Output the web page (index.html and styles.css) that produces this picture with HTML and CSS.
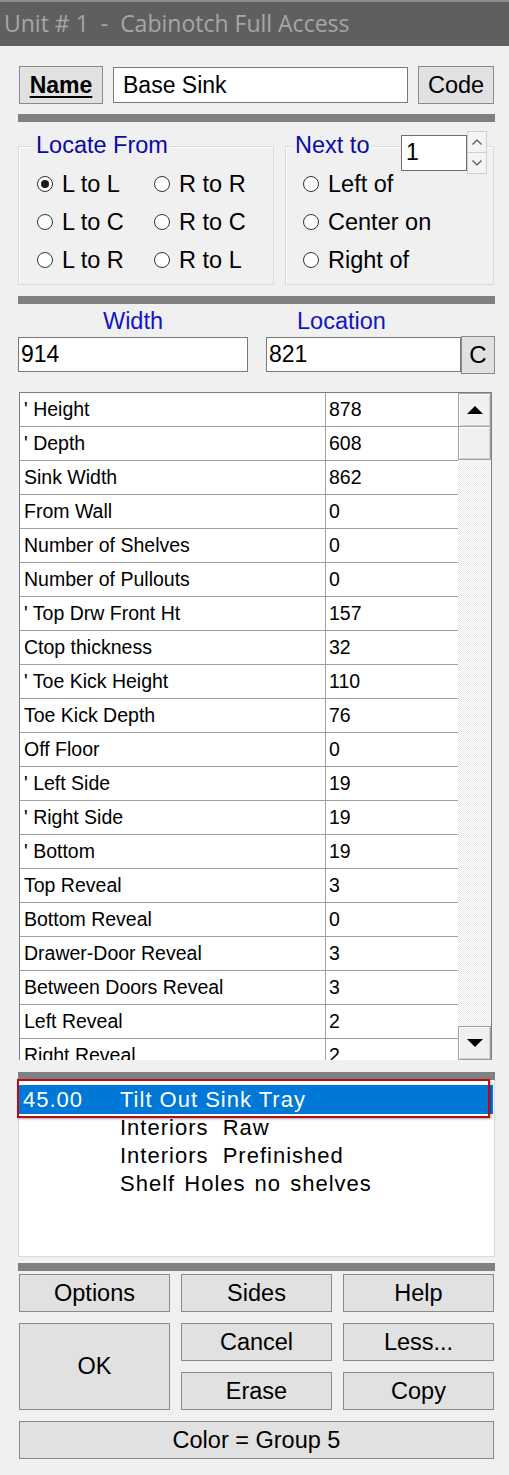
FILE: index.html
```html
<!DOCTYPE html>
<html>
<head>
<meta charset="utf-8">
<link rel="stylesheet" href="styles.css">
</head>
<body>
<div class="titlebar">Unit # 1  -  Cabinotch Full Access</div>
<div class="main">
  <div class="name-row">
    <div class="btn name-btn"><span class="u">Name</span></div>
    <div class="field name-field">Base Sink</div>
    <div class="btn code-btn">Code</div>
  </div>
  <div class="bar bar1"></div>
  <div class="groups">
    <div class="group locate">
      <span class="legend">Locate From</span>
      <div class="radios two">
        <div class="radio"><span class="dot on"></span>L to L</div>
        <div class="radio"><span class="dot"></span>R to R</div>
        <div class="radio"><span class="dot"></span>L to C</div>
        <div class="radio"><span class="dot"></span>R to C</div>
        <div class="radio"><span class="dot"></span>L to R</div>
        <div class="radio"><span class="dot"></span>R to L</div>
      </div>
    </div>
    <div class="group nextto">
      <span class="legend">Next to</span>
      <div class="spinner">
        <div class="spin-field">1</div>
        <div class="spin-btns">
          <div class="spin-btn"><svg width="12" height="8" viewBox="0 0 12 8"><polyline points="1.5,6.5 6,2 10.5,6.5" fill="none" stroke="#555" stroke-width="1.2"/></svg></div>
          <div class="spin-btn"><svg width="12" height="8" viewBox="0 0 12 8"><polyline points="1.5,1.5 6,6 10.5,1.5" fill="none" stroke="#555" stroke-width="1.2"/></svg></div>
        </div>
      </div>
      <div class="radios one">
        <div class="radio"><span class="dot"></span>Left of</div>
        <div class="radio"><span class="dot"></span>Center on</div>
        <div class="radio"><span class="dot"></span>Right of</div>
      </div>
    </div>
  </div>
  <div class="bar bar2"></div>
  <div class="dims">
    <div class="dim-col w-col">
      <div class="dim-label center">Width</div>
      <div class="field w-field">914</div>
    </div>
    <div class="dim-col l-col">
      <div class="dim-label loc">Location</div>
      <div class="loc-row">
        <div class="field l-field">821</div>
        <div class="btn c-btn">C</div>
      </div>
    </div>
  </div>
  <div class="grid-wrap">
    <div class="rows">
      <div class="row"><div class="k">' Height</div><div class="v">878</div></div>
      <div class="row"><div class="k">' Depth</div><div class="v">608</div></div>
      <div class="row"><div class="k">Sink Width</div><div class="v">862</div></div>
      <div class="row"><div class="k">From Wall</div><div class="v">0</div></div>
      <div class="row"><div class="k">Number of Shelves</div><div class="v">0</div></div>
      <div class="row"><div class="k">Number of Pullouts</div><div class="v">0</div></div>
      <div class="row"><div class="k">' Top Drw Front Ht</div><div class="v">157</div></div>
      <div class="row"><div class="k">Ctop thickness</div><div class="v">32</div></div>
      <div class="row"><div class="k">' Toe Kick Height</div><div class="v">110</div></div>
      <div class="row"><div class="k">Toe Kick Depth</div><div class="v">76</div></div>
      <div class="row"><div class="k">Off Floor</div><div class="v">0</div></div>
      <div class="row"><div class="k">' Left Side</div><div class="v">19</div></div>
      <div class="row"><div class="k">' Right Side</div><div class="v">19</div></div>
      <div class="row"><div class="k">' Bottom</div><div class="v">19</div></div>
      <div class="row"><div class="k">Top Reveal</div><div class="v">3</div></div>
      <div class="row"><div class="k">Bottom Reveal</div><div class="v">0</div></div>
      <div class="row"><div class="k">Drawer-Door Reveal</div><div class="v">3</div></div>
      <div class="row"><div class="k">Between Doors Reveal</div><div class="v">3</div></div>
      <div class="row"><div class="k">Left Reveal</div><div class="v">2</div></div>
      <div class="row"><div class="k">Right Reveal</div><div class="v">2</div></div>
    </div>
    <div class="scrollbar">
      <div class="sb-btn"><svg width="18" height="10" viewBox="0 0 18 10"><polygon points="1,9 9,1 17,9" fill="#000"/></svg></div>
      <div class="sb-thumb"></div>
      <div class="sb-track"></div>
      <div class="sb-btn"><svg width="18" height="10" viewBox="0 0 18 10"><polygon points="1,1 9,9 17,1" fill="#000"/></svg></div>
    </div>
  </div>
  <div class="bar bar3"></div>
  <div class="listbox">
    <div class="line sel"><span class="num">45.00</span><span class="desc">Tilt Out Sink Tray</span></div>
    <div class="line"><span class="num"></span><span class="desc">Interiors  Raw</span></div>
    <div class="line"><span class="num"></span><span class="desc">Interiors  Prefinished</span></div>
    <div class="line"><span class="num"></span><span class="desc wide">Shelf Holes no shelves</span></div>
    <div class="redframe"></div>
  </div>
  <div class="bar bar4"></div>
  <div class="buttons">
    <div class="btn">Options</div>
    <div class="btn">Sides</div>
    <div class="btn">Help</div>
    <div class="btn ok">OK</div>
    <div class="btn">Cancel</div>
    <div class="btn">Less...</div>
    <div class="btn">Erase</div>
    <div class="btn">Copy</div>
    <div class="btn color">Color = Group 5</div>
  </div>
</div>
</body>
</html>
```

FILE: styles.css
```css
* { box-sizing: border-box; }
html, body { margin: 0; padding: 0; }
body {
  background: #f0f0f0;
  width: 509px;
  height: 1475px;
  overflow: hidden;
  font-family: "Liberation Sans", Arial, sans-serif;
  font-size: 23.5px;
  color: #000;
}
.titlebar {
  height: 46px;
  border-top: 2px solid #8e8e8e;
  background: #5f5f5f;
  color: #a6a6a6;
  font-family: "Open Sans", "Noto Sans", sans-serif;
  font-size: 23px;
  line-height: 43px;
  padding-left: 4px;
  white-space: pre;
}
.main { padding-left: 18px; width: 495px; }

.btn {
  background: #e1e1e1;
  border: 1px solid #8a8a8a;
  display: flex;
  align-items: center;
  justify-content: center;
  font-size: 23.5px;
}
.field {
  background: #fff;
  border: 1px solid #7a7a7a;
  display: flex;
  align-items: center;
  padding-left: 9px;
  font-size: 23px;
}

.name-row { display: flex; margin-top: 20px; height: 38px; align-items: flex-start; }
.name-btn { width: 84px; height: 38px; margin-left: 1px; font-weight: bold; font-size: 23px; }
.name-btn .u { text-decoration: underline; text-underline-offset: 3px; text-decoration-thickness: 2px; }
.name-field { width: 295px; height: 36px; margin-left: 10px; margin-top: 1px; }
.code-btn { width: 76px; height: 38px; margin-left: 10px; }

.bar { background: #808080; height: 8px; width: 477px; }
.bar1 { margin-top: 10px; }
.bar2 { margin-top: 11px; }
.bar3 { margin-top: 12px; }
.bar4 { margin-top: 6px; }

.groups { display: flex; }
.group {
  position: relative;
  margin-top: 24px;
  height: 139px;
  border: 1px solid #d9d9d9;
  box-shadow: inset 1px 1px 0 #fff;
  padding-top: 18px;
}
.locate { width: 256px; padding-left: 18px; }
.nextto { width: 209px; margin-left: 11px; padding-left: 17px; }
.legend {
  position: absolute;
  top: -15px;
  left: 15px;
  padding: 0 2px;
  background: #f0f0f0;
  color: #0a0aa8;
  font-size: 23.5px;
  line-height: 26px;
}
.nextto .legend { left: 7px; }
.radios { display: grid; grid-auto-rows: 38px; }
.radios.two { grid-template-columns: 117px auto; }
.radio { display: flex; align-items: center; font-size: 23.5px; }
.dot {
  width: 16px;
  height: 16px;
  border-radius: 50%;
  border: 1px solid #333;
  background: #fff;
  margin-right: 9px;
  display: flex;
  align-items: center;
  justify-content: center;
  flex: none;
}
.dot.on::after {
  content: "";
  width: 8px;
  height: 8px;
  border-radius: 50%;
  background: #1a1a1a;
}

.spinner { position: absolute; left: 115px; top: -16px; display: flex; align-items: center; }
.spin-field { width: 66px; height: 36px; background: #fff; border: 1px solid #6f6f6f; padding-left: 4px; font-size: 23px; display: flex; align-items: center; }
.spin-btns { display: flex; flex-direction: column; width: 20px; height: 43px; }
.spin-btn {
  flex: 1;
  background: #f4f4f4;
  border: 1px solid #cfcfcf;
  display: flex;
  align-items: center;
  justify-content: center;
}
.spin-btn + .spin-btn { border-top: none; }

.dims { display: flex; }
.dim-label { height: 33px; line-height: 33px; color: #1414c8; font-size: 23.5px; padding-top: 1px; }
.dim-label.center { text-align: center; }
.dim-label.loc { padding-left: 31px; }
.w-col { width: 230px; }
.w-field { width: 230px; height: 35px; padding-left: 2px; }
.l-col { margin-left: 18px; }
.loc-row { display: flex; align-items: center; height: 35px; }
.l-field { width: 195px; height: 35px; padding-left: 2px; }
.c-btn { width: 34px; height: 38px; font-size: 24px; }

.grid-wrap {
  margin-top: 20px;
  margin-left: 1px;
  width: 473px;
  height: 668px;
  border: 1px solid #7e7e7e;
  border-bottom: none;
  display: flex;
  overflow: hidden;
  background: #fff;
}
.rows { width: 438px; flex: none; }
.row { display: flex; height: 34px; border-bottom: 1px solid #a0a0a0; }
.k { width: 306px; border-right: 1px solid #a0a0a0; padding-left: 4px; line-height: 33px; font-size: 19.5px; white-space: pre; }
.v { width: 132px; padding-left: 3px; line-height: 33px; font-size: 19.5px; }
.scrollbar { width: 33px; display: flex; flex-direction: column; height: 667px; }
.sb-btn, .sb-thumb {
  height: 34px;
  flex: none;
  background: #f0f0f0;
  border: 1px solid #a0a0a0;
  box-shadow: inset 1px 1px 0 #fff, inset -1px -1px 0 #d0d0d0;
  display: flex;
  align-items: center;
  justify-content: center;
}
.sb-thumb { height: 33px; border-top: none; }
.sb-track {
  flex: 1;
  background: repeating-conic-gradient(#ffffff 0 25%, #e9e9e9 0 50%) 0 0 / 2px 2px;
}

.listbox {
  position: relative;
  width: 477px;
  height: 177px;
  background: #fff;
  border: 1px solid #dadada;
  border-top: none;
  padding-top: 5px;
}
.line { height: 28px; line-height: 28px; display: flex; font-size: 22px; letter-spacing: 1px; white-space: pre; }
.line.sel { background: #0078d7; color: #fff; width: 474px; height: 29px; line-height: 29px; }
.num { width: 101px; padding-left: 4px; }
.desc.wide { word-spacing: 2px; }
.redframe {
  position: absolute;
  left: -2px;
  top: -1px;
  width: 473px;
  height: 39px;
  border: 2px solid #b80d16;
  box-shadow: 1px 1px 2px rgba(0,0,0,0.35);
}

.buttons {
  margin-top: 3px;
  margin-left: 1px;
  display: grid;
  grid-template-columns: 151px 151px 151px;
  grid-template-rows: 38px 38px 38px 38px;
  column-gap: 11px;
  row-gap: 11px;
}
.ok { grid-row: 2 / 4; grid-column: 1; }
.color { grid-column: 1 / 4; }
```
